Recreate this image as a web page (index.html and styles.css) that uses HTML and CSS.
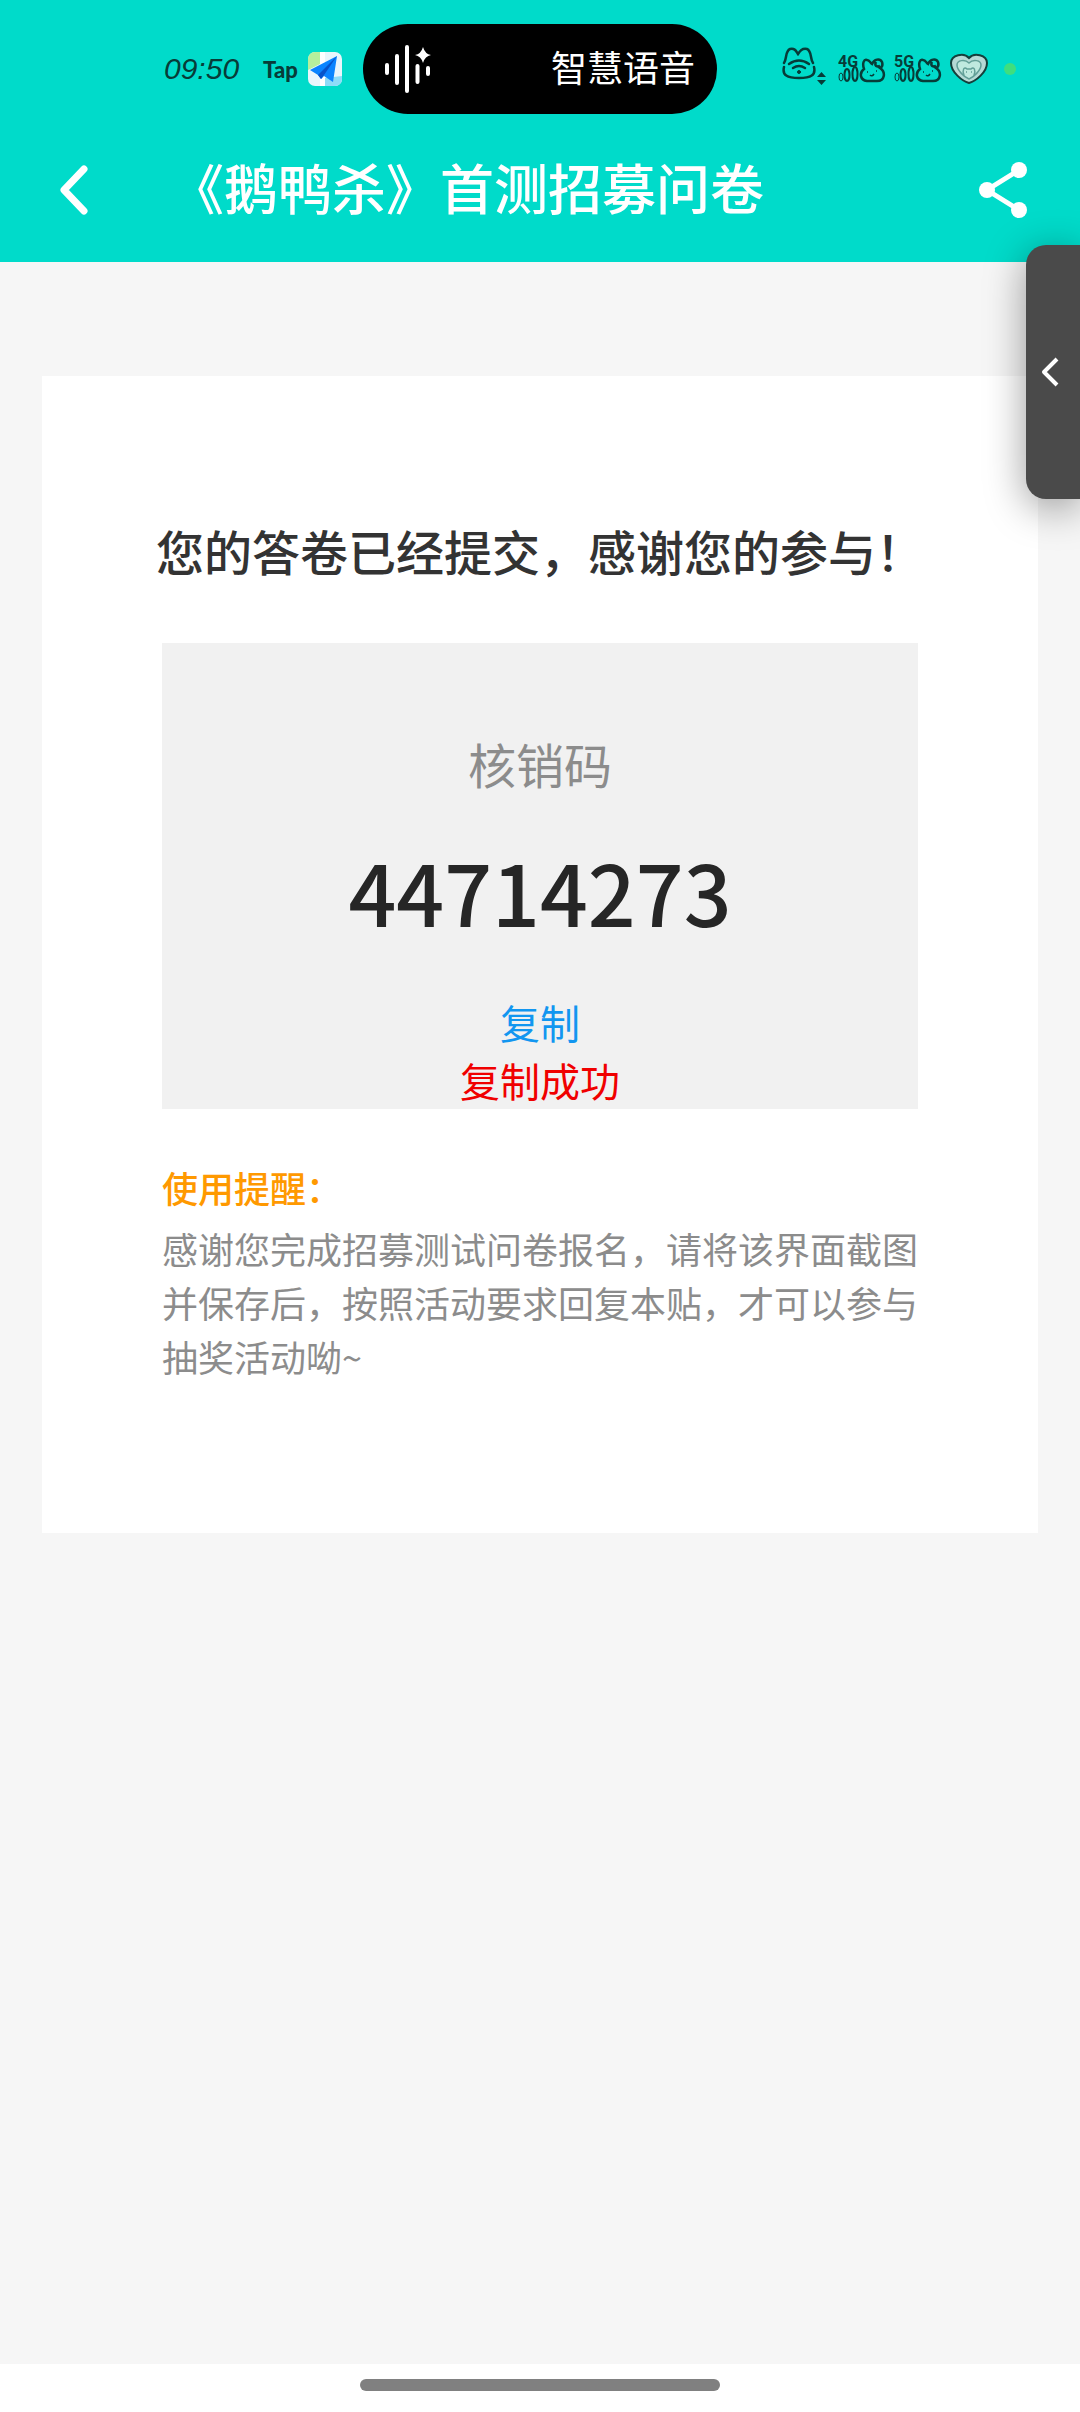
FILE: index.html
```
<!DOCTYPE html>
<html lang="zh-CN">
<head>
  <meta charset="UTF-8">
  <meta name="viewport" content="width=device-width, initial-scale=1.0">
  <title>《鹅鸭杀》首测招募问卷</title>
  <link rel="stylesheet" href="styles.css">
</head>
<body>
  <!-- Header -->
  <header class="header">
    <div class="status-bar">
      <div class="status-left">
        <span class="time">09:50</span>
        <span class="tap">Tap</span>
        <svg class="app-icon" width="34" height="34" viewBox="0 0 34 34">
          <defs><clipPath id="app-clip"><rect width="34" height="34" rx="7"/></clipPath></defs>
          <g clip-path="url(#app-clip)">
            <rect width="34" height="34" fill="#e9f6fc"/>
            <path d="M0 0h12v12L0 18z" fill="#b5f09c"/>
            <path d="M12 0h5v34h-5z" fill="#fff"/>
            <path d="M17 26l17-2v10H17z" fill="#8edcf8"/>
            <path d="M29 4L2 18l8 5 3 4 3-3 9 6z" fill="#0a84ff"/>
            <path d="M29 4L10 23l3 4 3-4z" fill="#0753c9"/>
          </g>
        </svg>
      </div>
      <div class="island">
        <svg width="48" height="50" viewBox="0 0 48 50" fill="none" stroke="#fff" stroke-width="4" stroke-linecap="round">
          <path d="M4 21v8M14 12v27M24 3v44M34.500 22v16M45 24v6"/>
          <path d="M40 3q2 7 8 8-6 1-8 8-2-7-8-8 6-1 8-8z" fill="#fff" stroke="none"/>
        </svg>
        <span class="island-text">智慧语音</span>
      </div>
      <div class="status-right">
        <svg class="wifi" width="44" height="44" viewBox="0 0 44 44" fill="none" stroke="#073c38" stroke-width="2.500" stroke-linecap="round">
          <path d="M2 16C5 12 3 4 8 2c5-1 6 2 8 5 2-3 4-6 9-5 5 2 3 10 6 14M2 20c-2 8 3 11 15 11s17-3 15-11"/>
          <path d="M7 17q10-7 20 0M11 21q6-4 12 0"/>
          <circle cx="17" cy="25" r="1.500" fill="#073c38" stroke-width="1"/>
          <path d="M39.500 25l4.500 5h-9zM39.500 38l4.500-5h-9z" fill="#073c38" stroke="none"/>
        </svg>
        <svg class="signal" width="48" height="40" viewBox="0 0 48 40">
          <text x="0" y="18">4G</text>
          <use href="#signal-shape"/>
        </svg>
        <svg class="signal" width="48" height="40" viewBox="0 0 48 40">
          <text x="0" y="18">5G</text>
          <g id="signal-shape" fill="none" stroke="#073c38" stroke-width="2">
            <ellipse cx="3" cy="28" rx="2" ry="4" stroke-width="1"/>
            <ellipse cx="9" cy="26" rx="2.500" ry="6"/>
            <ellipse cx="17" cy="25" rx="2.500" ry="7"/>
            <path d="M26 20c-2-6 0-10 3-9 3 0 3 3 5 4 2-5 8-6 10-2 1 3 0 5-2 6 6 4 5 13-3 13H29c-7-1-8-8-3-12zM38 13c-2 4 1 5 4 4" stroke-width="2.500"/>
            <path d="M29 23h1M38 22h1M32 26q2 2 4-1" stroke-width="1.500"/>
          </g>
        </svg>
        <svg class="heart" width="38" height="32" viewBox="0 0 38 32" fill="#b5d9d5" stroke="#143f3b" stroke-width="2">
          <path d="M19 30C12 28 1 19 1 10 1 2 14-1 19 5c5-6 18-3 18 5 0 9-11 18-18 20z"/>
          <path d="M19 26C14 24 7 17 7 12c0-5 8-6 12-2 4-4 12-3 12 2 0 5-7 12-12 14z" fill="#bfe9df" stroke="#619e97" stroke-width="1.500"/>
          <path d="M14 22c-2-5 0-9 3-6h4c3-3 5 1 3 6M16 19h1M21 19h1" fill="none" stroke="#619e97" stroke-width="1.500"/>
        </svg>
        <span class="dot"></span>
      </div>
    </div>
    <div class="nav-bar">
      <button class="icon-button" aria-label="返回">
        <svg width="32" height="52" viewBox="0 0 32 52" fill="none" stroke="#fff" stroke-width="7" stroke-linecap="round" stroke-linejoin="round">
          <path d="M24 5L4 26l20 21"/>
        </svg>
      </button>
      <h1 class="nav-title">《鹅鸭杀》首测招募问卷</h1>
      <button class="icon-button" aria-label="分享">
        <svg width="50" height="58" viewBox="0 0 50 58" fill="#fff">
          <path d="M41 9L9 29l32 20" fill="none" stroke="#fff" stroke-width="5"/>
          <circle cx="41" cy="9" r="8"/>
          <circle cx="9" cy="29" r="8"/>
          <circle cx="41" cy="49" r="8"/>
        </svg>
      </button>
    </div>
  </header>

  <!-- Main Content -->
  <main class="container">
    <div class="card">
      <h2 class="card-title">您的答卷已经提交，感谢您的参与！</h2>
      <div class="code-box">
        <div class="code-label">核销码</div>
        <div class="code" id="code">44714273</div>
        <button class="copy-button">复制</button>
        <div class="copy-success" role="status">复制成功</div>
      </div>
      <h3 class="tips-title">使用提醒：</h3>
      <p class="tips">感谢您完成招募测试问卷报名，请将该界面截图并保存后，按照活动要求回复本贴，才可以参与抽奖活动呦~</p>
    </div>
  </main>

  <!-- Side drawer handle -->
  <button class="side-tab" aria-label="展开">
    <svg width="18" height="32" viewBox="0 0 18 32" fill="none" stroke="#fff" stroke-width="4" stroke-linejoin="round">
      <path d="M16 3L3 16l13 13"/>
    </svg>
  </button>

  <footer class="home-bar">
    <div class="home-indicator"></div>
  </footer>
</body>
</html>
```
FILE: styles.css
```
* {
  box-sizing: border-box;
}

body {
  font-family: "Noto Sans CJK SC", sans-serif;
  margin: 0;
  min-height: 100vh;
  display: flex;
  flex-direction: column;
  background-color: #f6f6f6;
  color: #333;
}

h1, h2, h3, p {
  margin: 0;
}

button {
  font-family: inherit;
  background: none;
  border: none;
  padding: 0;
  cursor: pointer;
}

svg {
  display: block;
  flex-shrink: 0;
}

/* Header Styles */
.header {
  background-color: #00dbca;
  color: #fff;
}

/* Equal side columns keep the island centred */
.status-bar {
  display: grid;
  grid-template-columns: 1fr 354px 1fr;
  align-items: center;
  padding: 24px 0 4px;
}

.status-left {
  display: flex;
  align-items: center;
  padding-left: 164px;
  color: #073c38;
}

.time {
  font-family: "Liberation Sans", sans-serif;
  font-size: 30px;
  font-style: italic;
  margin-right: 24px;
}

.tap {
  font-family: Lato, sans-serif;
  font-size: 22px;
  font-weight: 900;
  margin-right: 10px;
}

.island {
  height: 90px;
  padding: 0 22px 0 20px;
  border-radius: 45px;
  background-color: #000;
  display: flex;
  align-items: center;
  justify-content: space-between;
}

.island-text {
  padding-bottom: 6px;
  font-size: 36px;
}

.status-right {
  display: flex;
  align-items: center;
  justify-content: flex-end;
  gap: 8px;
  padding-right: 64px;
}

.wifi {
  margin-right: 4px;
}

.signal text {
  font-family: Roboto, sans-serif;
  font-size: 16px;
  font-weight: 700;
  fill: #073c38;
}

.dot {
  width: 12px;
  height: 12px;
  margin-left: 8px;
  border-radius: 50%;
  background-color: #3fde7e;
}

.nav-bar {
  height: 144px;
  padding: 0 52px 0 60px;
  display: flex;
  align-items: center;
}

.nav-title {
  flex: 1;
  margin-left: 78px;
  padding-bottom: 6px;
  font-size: 54px;
  font-weight: 500;
  line-height: 72px;
}

/* Card Styles */
.container {
  flex: 1;
  padding: 114px 42px;
}

.card {
  background-color: #fff;
  padding: 138px 120px 150px;
}

.card-title {
  display: flex;
  justify-content: center;
  white-space: nowrap;
  font-size: 48px;
  font-weight: 500;
  line-height: 72px;
}

.code-box {
  margin-top: 57px;
  padding-top: 84px;
  display: flex;
  flex-direction: column;
  align-items: center;
  background-color: #f1f1f1;
}

.code-label {
  font-size: 48px;
  line-height: 72px;
  color: #8c8c8c;
}

.code {
  margin: 44px 0 54px;
  font-size: 84px;
  font-weight: 500;
  line-height: 96px;
  color: #262626;
}

.copy-button,
.copy-success {
  font-size: 40px;
  line-height: 58px;
}

.copy-button {
  color: #1296f0;
}

.copy-success {
  color: #f00000;
}

.tips-title {
  margin-top: 48px;
  font-size: 36px;
  font-weight: 500;
  line-height: 60px;
  color: #ff9900;
}

.tips {
  margin-top: 4px;
  font-size: 36px;
  line-height: 54px;
  color: #8c8c8c;
}

/* Floats over the right edge of the page */
.side-tab {
  position: absolute;
  top: 245px;
  right: 0;
  width: 54px;
  height: 254px;
  display: flex;
  align-items: center;
  padding-left: 15px;
  border-radius: 20px 0 0 20px;
  background-color: #4a4a4a;
  box-shadow: 0 8px 40px rgba(0, 0, 0, 0.4);
}

.home-bar {
  height: 48px;
  display: flex;
  align-items: center;
  justify-content: center;
  padding-bottom: 6px;
  background-color: #fff;
}

.home-indicator {
  width: 360px;
  height: 12px;
  border-radius: 6px;
  background-color: #808080;
}
```
